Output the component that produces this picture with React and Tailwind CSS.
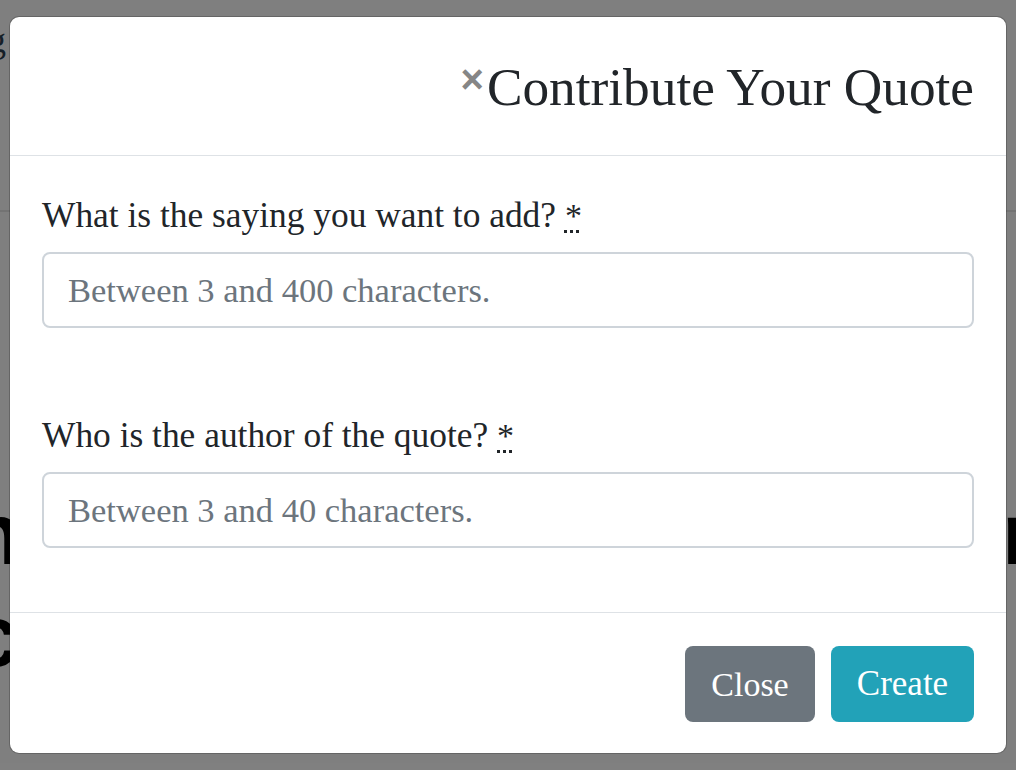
import React from 'react';

const serif = { fontFamily: '"Liberation Serif", "Times New Roman", serif' };
const sans = { fontFamily: '"Liberation Sans", Arial, sans-serif' };

function Field({ label, placeholder, gap }) {
  return (
    <div className={gap}>
      <label className="block text-[35.4px] leading-[54px] text-[#212529] mb-[10px]">
        {label}{' '}
        <abbr title="required" className="no-underline">
          <span className="leading-none underline decoration-dotted decoration-[3px] underline-offset-[3px] text-[34px]">*</span>
        </abbr>
      </label>
      <input
        type="text"
        placeholder={placeholder}
        className="block w-full h-[76px] px-6 rounded-[8px] border-2 border-[#ced4da] bg-white text-[34.5px] text-[#495057] placeholder:text-[#6c757d] outline-none"
        style={serif}
      />
    </div>
  );
}

export default function App() {
  return (
    <div className="relative w-[1016px] h-[770px] overflow-hidden bg-white" style={serif}>
      {/* page content under the backdrop */}
      <span className="absolute left-[-12px] top-[22px] text-[36px] leading-none text-[#2c3e50]">g</span>
      <div className="absolute left-0 top-[210px] w-full h-[2px] bg-[#e6e6e6]" />
      <span className="absolute left-[-32px] top-[490px] text-[88px] font-bold leading-none text-black" style={sans}>n</span>
      <span className="absolute left-[-30px] top-[592px] text-[88px] font-bold leading-none text-black" style={sans}>c</span>
      <span className="absolute left-[1002px] top-[490px] text-[88px] font-bold leading-none text-black" style={sans}>n</span>

      {/* backdrop */}
      <div className="absolute inset-0 bg-black/50">
        <div className="mx-auto mt-4 w-[998px] rounded-[10px] border border-black/20 bg-white bg-clip-padding">
          <div className="h-[139px] border-b border-[#dee2e6] px-8 pt-[35px] flex justify-end items-start">
            <button className="mt-[7px] mr-[3px] text-[40px] font-bold leading-none text-[#868686]" style={sans}>
              ×
            </button>
            <h4 className="text-[53.3px] leading-[72px] text-[#212529]">Contribute Your Quote</h4>
          </div>

          <div className="h-[456px] px-8 pt-8">
            <Field label="What is the saying you want to add?" placeholder="Between 3 and 400 characters." gap="mb-[80px]" />
            <Field label="Who is the author of the quote?" placeholder="Between 3 and 40 characters." />
          </div>

          <div className="h-[141px] border-t border-[#dee2e6] px-8 pt-[33px] flex justify-end items-start gap-4">
            <button className="h-[76px] w-[130px] rounded-[8px] bg-[#6c757d] text-white text-[34px]">Close</button>
            <button className="h-[76px] w-[143px] rounded-[8px] bg-[#22a2b8] text-white text-[35px]">Create</button>
          </div>
        </div>
      </div>
    </div>
  );
}
